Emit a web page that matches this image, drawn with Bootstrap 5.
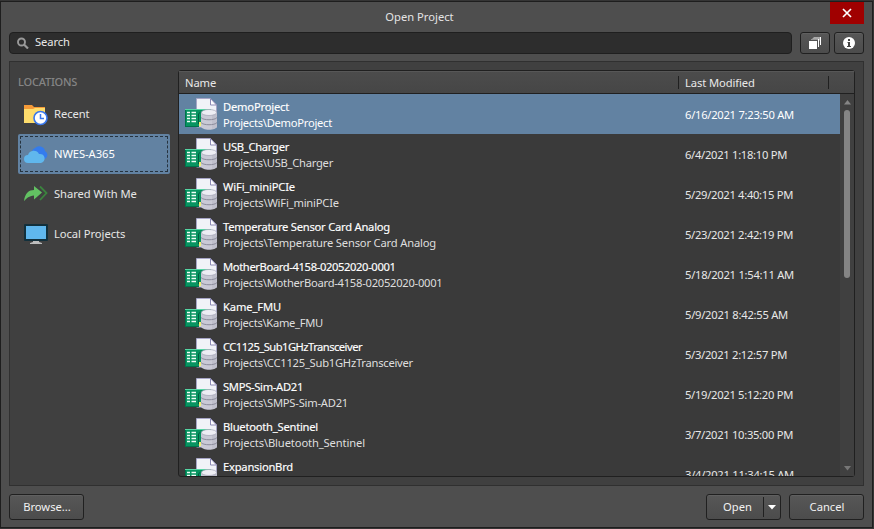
<!DOCTYPE html>
<html lang="en">
<head>
<meta charset="utf-8">
<title>Open Project</title>
<link href="https://cdn.jsdelivr.net/npm/bootstrap@5.3.0/dist/css/bootstrap.min.css" rel="stylesheet">
<style>
body{width:874px;height:529px;background:#353535;font:11.2px/16px "Noto Sans","Open Sans",sans-serif;color:#e8e8e8;padding-top:1px;overflow:hidden}
.dialog{width:873px;height:527px;background:#4e4e4e;border:1px solid #1e1e1e;padding:0 8px}
.titlebar{height:30px;color:#e4e4e4}
.titlebar span{padding-right:34px;line-height:29px}
.close-x{width:34px;height:22px;background:#a00000;top:0;right:8px;border:0}
.search{width:783px;height:22px;background:#2d2d2d;border:1px solid #1f1f1f;border-radius:4px;padding-left:7px}
.search span{margin-left:6px;padding-bottom:2px;letter-spacing:-.1px}
.tool,.push{background:linear-gradient(#575757,#4c4c4c);border:1px solid #202020;border-radius:3px;color:#f2f2f2;box-shadow:inset 0 1px #606060;padding:0}
.tool{width:30px;height:22px}
.push{height:26px;width:75px;padding-left:1px}
.panel{margin-top:7px;height:425px;background:#404040;border:1px solid #303030;padding:8px}
.side{width:152px;margin-right:8px}
.side h2{font-size:11px;line-height:16px;color:#858585;margin:4px 0 0;height:20px;letter-spacing:-.2px}
.loc{height:40px;border-radius:2px;padding:0 0 0 5px;gap:6px;color:#e6e6e6;letter-spacing:-.05px}
.loc span{padding-bottom:1px}
.loc.active{background:#6282a2;color:#fff;position:relative}
.loc.active::after{content:"";position:absolute;inset:2px;border:1px dashed #26333f}
.browser{width:677px;height:407px;background:#3a3a3a;border:1px solid #202020;border-radius:3px}
.head{height:23px;background:linear-gradient(#4c4c4c,#464646);border-bottom:1px solid #202020;box-shadow:inset 0 1px #575757;padding-left:6px;letter-spacing:-.1px}
.head .name{width:493px;padding-top:2px}.head .mod{width:150px;padding-left:6px}
.split{border-left:1px solid #202020;height:13px;line-height:14px}
.items{width:661px;height:382px;overflow:hidden}
.item{height:40px;padding-left:6px}
.item.active{background:#6282a2}
.item .label{width:462px;margin-left:6px;padding-top:1px}
.item .title{color:#fff;-webkit-text-stroke:.15px #fff}
.item .path{color:#dedede}
.item .date{padding-top:2px}
.item.active .path,.item.active .date{color:#fff}
.scroll{width:14px;height:382px;background:#404040;padding:6px 0 5px}
.thumb{width:6px;height:168px;background:#858585;border-radius:3px;margin-top:5px}
.foot{margin-top:8px}
.foot .last{margin-left:8px}
.drop{width:17px;height:20px;border-left:1px solid #202020}
svg{display:block;flex:none}
</style>
<script src="https://cdn.jsdelivr.net/npm/bootstrap@5.3.0/dist/js/bootstrap.bundle.min.js"></script>
</head>
<body>
<svg width="0" height="0" class="position-absolute">
<symbol id="project" viewBox="0 0 32 32">
<path d="M11.500.5H25.500l6 6.500V29H11.500z" fill="#f1f3f8" stroke="#a6a5c6"/><path d="M25.500 .5V7h6z" fill="#fff" stroke="#8c8ab4"/>
<path d="M0 11h26v17H0z" fill="#079461"/><path d="M0 11.500h26" stroke="#55d7a4"/><path d="M.5 12v16M0 28.500h14" stroke="#00734b"/>
<path d="M2 14.500h3m1.500 0h4.500M2 17.500h3m1.500 0h4.500M2 20.500h3m1.500 0h4.500M2 23.500h3m1.500 0h4.500" stroke="#f0fff8" stroke-width="1.500"/>
<path d="M13.500 26V16l2-2" fill="none" stroke="#005f40"/><path d="M14 24h2v4h-2z" fill="#f3ef74"/>
<path d="M16 15v13c0 5 16 5 16 0V15z" fill="#c9c9d5"/><path d="M27 16h5v13q-2 2-5 2z" fill="#bfbfcc"/><path d="M16 19.500c2 3 14 3 16 0M16 24.500c2 3 14 3 16 0" fill="none" stroke="#8c8c9c"/>
<ellipse cx="24" cy="14.500" rx="7.700" ry="3" fill="#eeeef4" stroke="#a4a4b5" stroke-width=".7"/>
</symbol></svg>
<main class="dialog position-relative">
<header class="titlebar d-flex justify-content-center"><span>Open Project</span>
<button class="close-x position-absolute d-flex align-items-center justify-content-center" aria-label="Close"><svg width="10" height="10"><path d="M1 1l8 8M9 1L1 9" stroke="#fff" stroke-width="1.700"/></svg></button></header>
<div class="d-flex">
<div class="search d-flex align-items-center"><svg width="12" height="12"><circle cx="4.500" cy="5" r="3.500" fill="none" stroke="#999" stroke-width="1.900"/><path d="M7 7.500l4 4" stroke="#999" stroke-width="2.200"/></svg><span>Search</span></div>
<button class="tool ms-2 d-flex align-items-center justify-content-center" aria-label="Windows"><svg width="14" height="14"><path d="M4 3l2-2h7v2l-2 2V3z" fill="#aaa"/><path d="M3 3h7v1H3z" fill="#999"/><path d="M10.500 3v8M12.500 1v8" stroke="#fff"/><path d="M1 5h8v8H1z" fill="#fff"/></svg></button>
<button class="tool ms-1 d-flex align-items-center justify-content-center" aria-label="Information"><svg width="12" height="12"><circle cx="6" cy="6" r="6" fill="#fff"/><path d="M5 2h2v2H5zM4.500 5H7v4h1v1H4V9h1V6h-.500z" fill="#444"/></svg></button>
</div>
<section class="panel d-flex">
<aside class="side"><h2>LOCATIONS</h2>
<div class="loc d-flex align-items-center"><svg width="25" height="24"><path d="M1 3h8l2 2h11v5H1z" fill="#f59a38"/><path d="M1 7h9l2-1h10v15H1z" fill="#fedd6c"/><circle cx="17.500" cy="16" r="6.500" fill="#fff" stroke="#3a78ed" stroke-width="1.600"/><path d="M17.500 12v4.500H21" fill="none" stroke="#3a78ed" stroke-width="1.500"/></svg><span>Recent</span></div>
<div class="loc active d-flex align-items-center"><svg width="25" height="24"><path d="M10 14a5 5 0 0 1 2-8 6 6 0 0 1 10 3 4.500 4.500 0 0 1 0 8H10z" fill="#347ced"/><path d="M5 21a4 4 0 0 1 0-8 6 6 0 0 1 11-1 4.500 4.500 0 0 1 2 9z" fill="#60b7ed"/></svg><span>NWES-A365</span></div>
<div class="loc d-flex align-items-center"><svg width="25" height="24"><path d="M1 19C2 11 6 8 11 8V4l8 6.500-8 7v-4C6 14 4 16 1 19z" fill="#62c162"/><path d="M17 4.500l6.500 6.500L17 18" fill="none" stroke="#3b843e" stroke-width="1.800"/></svg><span>Shared With Me</span></div>
<div class="loc d-flex align-items-center"><svg width="25" height="24"><rect x="1" y="2" width="24" height="17" rx="1" fill="#12303c"/><path d="M3 4h20v13H3z" fill="#60b7ed"/><path d="M10 19h6v1l3 1v1H7v-1l3-1z" fill="#bdbdbd"/></svg><span>Local Projects</span></div>
</aside>
<div class="browser">
<div class="head d-flex align-items-center"><div class="name">Name</div><div class="split mod">Last Modified</div><div class="split"></div></div>
<div class="d-flex"><div class="items" id="items"></div>
<div class="scroll d-flex flex-column align-items-center"><svg width="7" height="5"><path d="M3.500 0L7 4.500H0z" fill="#858585"/></svg><div class="thumb"></div><svg class="mt-auto" width="7" height="5"><path d="M0 0h7L3.500 4.500z" fill="#777"/></svg></div></div>
</div></section>
<footer class="foot d-flex">
<button class="push">Browse...</button>
<button class="push ms-auto d-flex align-items-center"><span class="flex-fill ps-1">Open</span><span class="drop d-flex align-items-center justify-content-center"><svg width="8" height="5"><path d="M0 0h8L4 4.500z" fill="#fff"/></svg></span></button>
<button class="push last">Cancel</button>
</footer>
</main>
<script>
// name, modified, then the column widths of the name, path and date texts
const projects=[
["DemoProject","6/16/2021 7:23:50 AM",66,109,109],
["USB_Charger","6/4/2021 1:18:10 PM",66,110,102],
["WiFi_miniPCIe","5/29/2021 4:40:15 PM",72,116,108],
["Temperature Sensor Card Analog","5/23/2021 2:42:19 PM",167,213,108],
["MotherBoard-4158-02052020-0001","5/18/2021 1:54:11 AM",172.500,219.500,109],
["Kame_FMU","5/9/2021 8:42:55 AM",58,100,103],
["CC1125_Sub1GHzTransceiver","5/3/2021 2:12:57 PM",139,190,102],
["SMPS-Sim-AD21","5/19/2021 5:12:20 PM",80,125,108],
["Bluetooth_Sentinel","3/7/2021 10:35:00 PM",95,142,108],
["ExpansionBrd","3/4/2021 11:34:15 AM",70,116,109]];
document.getElementById("items").innerHTML=projects.map(([n,d,a,b,c],i)=>`<div class="item d-flex align-items-center${i?"":" active"}"><svg width="32" height="32"><use href="#project"/></svg><div class="label"><div class="title"><span data-fit="${a}">${n}</span></div><div class="path"><span data-fit="${b}">Projects\\${n}</span></div></div><div class="date"><span data-fit="${c}">${d}</span></div></div>`).join("");
document.querySelectorAll("[data-fit]").forEach(e=>{
  const gap=(+e.dataset.fit-e.getBoundingClientRect().width)/e.textContent.length;
  e.style.letterSpacing=gap.toFixed(3)+"px";
});
</script>
</body>
</html>
